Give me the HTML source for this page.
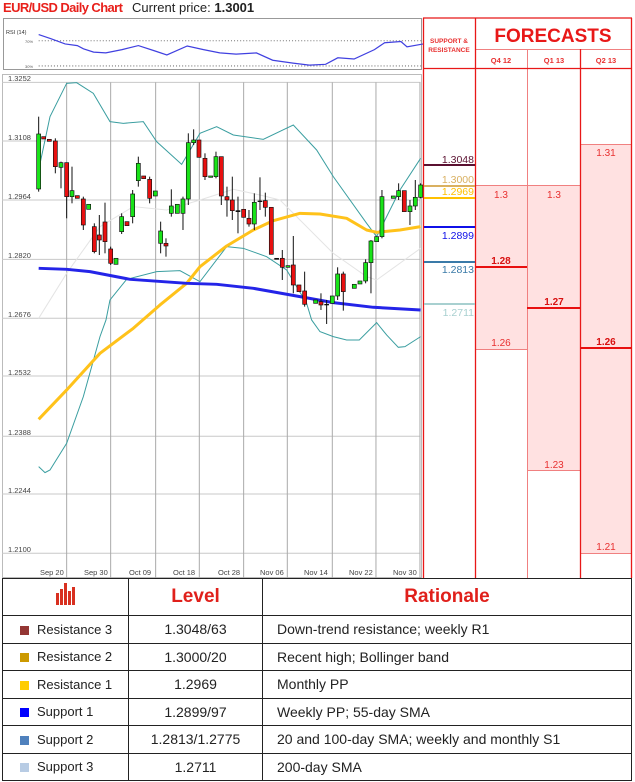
<!DOCTYPE html>
<html><head><meta charset="utf-8"><style>
*{margin:0;padding:0;box-sizing:border-box}
body{width:635px;height:782px;background:#fff;font-family:"Liberation Sans",sans-serif;position:relative;overflow:hidden}
.a{position:absolute;white-space:nowrap}
table{position:absolute;left:2px;top:578px;width:630px;border-collapse:collapse;font-size:13px;color:#222}
td{border:1px solid #222;height:27.5px;padding:0}
td.c{text-align:center;font-size:14px}
td.r{padding-left:14px;font-size:14px}
.sq{display:inline-block;width:9px;height:9px;margin:0 8px 0 17px;vertical-align:-1px}
th{border:1px solid #222;height:37px;color:#e0201b;font-size:19px;font-weight:bold}
</style></head><body>
<div class="a" style="left:3px;top:0px;font-size:13px;color:#e8201b;font-weight:bold;letter-spacing:-0.6px">EUR/USD Daily Chart</div>
<div class="a" style="left:132px;top:0px;font-size:13px;color:#222">Current price: <b>1.3001</b></div>

<svg class="a" style="left:0;top:0" width="635" height="782">
<!-- RSI -->
<rect x="3.5" y="18.5" width="418" height="51" fill="#fff" stroke="#999"/>
<g transform="scale(0.407)">
<line x1="95" y1="100" x2="1040" y2="100" stroke="#777" stroke-width="2.5" stroke-dasharray="2.5,5"/>
<line x1="95" y1="162" x2="1040" y2="162" stroke="#777" stroke-width="2.5" stroke-dasharray="2.5,5"/>
<polyline fill="none" stroke="#4040e0" stroke-width="3" points="95,85 125,95 160,108 190,112 205,120 230,128 260,130 300,122 340,112 380,125 410,135 460,113 500,122 540,130 580,133 630,130 670,148 720,155 760,160 800,158 830,142 870,145 920,122 945,105 985,102 1000,115 1040,108"/>
</g>
<text x="6" y="34" font-size="5.5" fill="#333" font-family="Liberation Sans">RSI (14)</text>
<text x="25" y="43" font-size="4" fill="#555" font-family="Liberation Sans">70%</text>
<text x="25" y="68" font-size="4" fill="#555" font-family="Liberation Sans">30%</text>

<!-- main chart -->
<rect x="2.5" y="74.5" width="419" height="503" fill="#fff" stroke="#bbb"/>
<g transform="translate(0,70) scale(0.3333)">
<g stroke="#c8c8c8" stroke-width="3">
<line x1="6" y1="37" x2="1262" y2="37"/><line x1="6" y1="213" x2="1262" y2="213"/><line x1="6" y1="390" x2="1262" y2="390"/><line x1="6" y1="568" x2="1262" y2="568"/><line x1="6" y1="745" x2="1262" y2="745"/><line x1="6" y1="918" x2="1262" y2="918"/><line x1="6" y1="1099" x2="1262" y2="1099"/><line x1="6" y1="1272" x2="1262" y2="1272"/><line x1="6" y1="1450" x2="1262" y2="1450"/>
</g>
<g stroke="#aaa" stroke-width="3">
<line x1="200" y1="37" x2="200" y2="1524"/><line x1="332" y1="37" x2="332" y2="1524"/><line x1="467" y1="37" x2="467" y2="1524"/><line x1="598" y1="37" x2="598" y2="1524"/><line x1="731" y1="37" x2="731" y2="1524"/><line x1="862" y1="37" x2="862" y2="1524"/><line x1="997" y1="37" x2="997" y2="1524"/><line x1="1128" y1="37" x2="1128" y2="1524"/><line x1="1260" y1="37" x2="1260" y2="1524"/>
</g>
<polyline fill="none" stroke="#e4e4e4" stroke-width="3" points="116,745 200,610 300,470 400,410 500,420 600,390 700,358 780,375 840,390 900,450 1000,550 1100,620 1130,630 1262,535"/>
<polyline fill="none" stroke="#3a9ea0" stroke-width="3" points="116,300 150,140 200,40 230,38 280,70 330,155 370,160 430,155 470,215 545,283 600,190 650,170 700,195 790,208 880,165 950,240 1000,320 1100,460 1130,500 1200,360 1262,265"/>
<polyline fill="none" stroke="#3a9ea0" stroke-width="3" points="116,1190 135,1208 150,1200 200,1120 250,980 300,800 318,750 330,690 380,628 470,605 540,602 600,635 680,530 730,535 800,560 860,600 920,700 935,750 960,785 1000,800 1040,810 1078,810 1130,758 1160,795 1195,832 1215,830 1262,800"/>
<polyline fill="none" stroke="#ffc21a" stroke-width="9" stroke-linejoin="round" points="116,1048 200,960 300,850 400,775 480,705 560,640 600,590 680,528 760,480 820,452 900,430 960,432 1040,445 1100,480 1130,487 1200,480 1262,470"/>
<polyline fill="none" stroke="#2424e8" stroke-width="9" stroke-linejoin="round" points="116,595 200,598 270,605 390,628 560,640 650,643 760,655 900,680 1000,698 1120,712 1262,720"/>
<g stroke="#111" stroke-width="3">
<line x1="116" y1="140" x2="116" y2="365"/><line x1="166" y1="205" x2="166" y2="310"/><line x1="183" y1="275" x2="183" y2="355"/><line x1="200" y1="278" x2="200" y2="445"/><line x1="216" y1="290" x2="216" y2="400"/><line x1="250" y1="380" x2="250" y2="480"/><line x1="283" y1="460" x2="283" y2="550"/><line x1="298" y1="435" x2="298" y2="555"/><line x1="315" y1="398" x2="315" y2="550"/><line x1="332" y1="530" x2="332" y2="585"/><line x1="365" y1="430" x2="365" y2="492"/><line x1="398" y1="360" x2="398" y2="460"/><line x1="415" y1="260" x2="415" y2="350"/><line x1="449" y1="320" x2="449" y2="400"/><line x1="482" y1="455" x2="482" y2="550"/><line x1="498" y1="505" x2="498" y2="560"/><line x1="514" y1="358" x2="514" y2="440"/><line x1="549" y1="380" x2="549" y2="480"/><line x1="565" y1="190" x2="565" y2="405"/><line x1="581" y1="178" x2="581" y2="225"/><line x1="615" y1="250" x2="615" y2="330"/><line x1="648" y1="245" x2="648" y2="325"/><line x1="664" y1="260" x2="664" y2="405"/><line x1="681" y1="350" x2="681" y2="440"/><line x1="697" y1="320" x2="697" y2="450"/><line x1="714" y1="380" x2="714" y2="490"/><line x1="747" y1="420" x2="747" y2="470"/><line x1="763" y1="370" x2="763" y2="480"/><line x1="780" y1="322" x2="780" y2="420"/><line x1="796" y1="368" x2="796" y2="440"/><line x1="847" y1="540" x2="847" y2="630"/><line x1="880" y1="498" x2="880" y2="670"/><line x1="914" y1="605" x2="914" y2="710"/><line x1="963" y1="670" x2="963" y2="720"/><line x1="980" y1="690" x2="980" y2="762"/><line x1="1013" y1="592" x2="1013" y2="690"/><line x1="1030" y1="605" x2="1030" y2="722"/><line x1="1097" y1="568" x2="1097" y2="640"/><line x1="1113" y1="510" x2="1113" y2="670"/><line x1="1146" y1="360" x2="1146" y2="505"/><line x1="1196" y1="340" x2="1196" y2="390"/><line x1="1230" y1="390" x2="1230" y2="465"/><line x1="1246" y1="330" x2="1246" y2="420"/><line x1="1262" y1="340" x2="1262" y2="385"/>
</g>
<g stroke="#111" stroke-width="2">
<rect x="110" y="192" width="12" height="165" fill="#19e319"/>
<rect x="125" y="200" width="12" height="7" fill="#e81010"/>
<rect x="142" y="208" width="12" height="6" fill="#e81010"/>
<rect x="160" y="213" width="12" height="77" fill="#e81010"/>
<rect x="177" y="278" width="12" height="14" fill="#19e319"/>
<rect x="194" y="278" width="12" height="102" fill="#e81010"/>
<rect x="210" y="362" width="12" height="18" fill="#19e319"/>
<rect x="226" y="377" width="12" height="8" fill="#e81010"/>
<rect x="244" y="387" width="12" height="78" fill="#e81010"/>
<rect x="260" y="403" width="12" height="15" fill="#19e319"/>
<rect x="277" y="470" width="12" height="75" fill="#e81010"/>
<rect x="292" y="495" width="12" height="15" fill="#e81010"/>
<rect x="309" y="456" width="12" height="59" fill="#e81010"/>
<rect x="326" y="537" width="12" height="43" fill="#e81010"/>
<rect x="342" y="565" width="12" height="18" fill="#19e319"/>
<rect x="359" y="440" width="12" height="45" fill="#19e319"/>
<rect x="375" y="455" width="12" height="12" fill="#e81010"/>
<rect x="392" y="372" width="12" height="68" fill="#19e319"/>
<rect x="409" y="280" width="12" height="52" fill="#19e319"/>
<rect x="425" y="318" width="12" height="8" fill="#e81010"/>
<rect x="443" y="328" width="12" height="57" fill="#e81010"/>
<rect x="460" y="363" width="12" height="15" fill="#19e319"/>
<rect x="476" y="483" width="12" height="37" fill="#19e319"/>
<rect x="492" y="520" width="12" height="8" fill="#e81010"/>
<rect x="508" y="408" width="12" height="22" fill="#19e319"/>
<rect x="526" y="403" width="12" height="27" fill="#19e319"/>
<rect x="543" y="387" width="12" height="43" fill="#19e319"/>
<rect x="559" y="218" width="12" height="169" fill="#19e319"/>
<rect x="575" y="210" width="12" height="8" fill="#19e319"/>
<rect x="591" y="210" width="12" height="52" fill="#e81010"/>
<rect x="609" y="265" width="12" height="55" fill="#e81010"/>
<rect x="626" y="318" width="12" height="4" fill="#19e319"/>
<rect x="642" y="260" width="12" height="60" fill="#19e319"/>
<rect x="658" y="260" width="12" height="118" fill="#e81010"/>
<rect x="675" y="380" width="12" height="10" fill="#e81010"/>
<rect x="691" y="390" width="12" height="32" fill="#e81010"/>
<rect x="708" y="422" width="12" height="3" fill="#111"/>
<rect x="725" y="418" width="12" height="24" fill="#e81010"/>
<rect x="741" y="445" width="12" height="17" fill="#e81010"/>
<rect x="757" y="397" width="12" height="65" fill="#19e319"/>
<rect x="774" y="393" width="12" height="2" fill="#111"/>
<rect x="790" y="392" width="12" height="20" fill="#e81010"/>
<rect x="808" y="412" width="12" height="141" fill="#e81010"/>
<rect x="824" y="565" width="12" height="3" fill="#111"/>
<rect x="841" y="565" width="12" height="27" fill="#e81010"/>
<rect x="858" y="587" width="12" height="5" fill="#19e319"/>
<rect x="874" y="585" width="12" height="60" fill="#e81010"/>
<rect x="891" y="645" width="12" height="20" fill="#e81010"/>
<rect x="908" y="663" width="12" height="40" fill="#e81010"/>
<rect x="941" y="690" width="12" height="10" fill="#19e319"/>
<rect x="957" y="695" width="12" height="10" fill="#e81010"/>
<rect x="974" y="703" width="12" height="2" fill="#111"/>
<rect x="991" y="678" width="12" height="22" fill="#19e319"/>
<rect x="1007" y="612" width="12" height="66" fill="#19e319"/>
<rect x="1024" y="612" width="12" height="53" fill="#e81010"/>
<rect x="1057" y="643" width="12" height="12" fill="#19e319"/>
<rect x="1074" y="633" width="12" height="9" fill="#19e319"/>
<rect x="1091" y="578" width="12" height="55" fill="#19e319"/>
<rect x="1107" y="513" width="12" height="65" fill="#19e319"/>
<rect x="1124" y="500" width="12" height="15" fill="#19e319"/>
<rect x="1140" y="380" width="12" height="120" fill="#19e319"/>
<rect x="1174" y="378" width="12" height="7" fill="#19e319"/>
<rect x="1190" y="362" width="12" height="18" fill="#19e319"/>
<rect x="1207" y="362" width="12" height="63" fill="#e81010"/>
<rect x="1224" y="408" width="12" height="17" fill="#19e319"/>
<rect x="1240" y="382" width="12" height="26" fill="#19e319"/>
<rect x="1256" y="345" width="12" height="37" fill="#19e319"/>
</g>
</g>
<g font-family="Liberation Sans" font-size="7.5" fill="#444">
<text x="8" y="81">1.3252</text><text x="8" y="140">1.3108</text><text x="8" y="199">1.2964</text><text x="8" y="258">1.2820</text><text x="8" y="317">1.2676</text><text x="8" y="375">1.2532</text><text x="8" y="435">1.2388</text><text x="8" y="493">1.2244</text><text x="8" y="552">1.2100</text>
<text x="40" y="575">Sep 20</text><text x="84" y="575">Sep 30</text><text x="129" y="575">Oct 09</text><text x="173" y="575">Oct 18</text><text x="218" y="575">Oct 28</text><text x="260" y="575">Nov 06</text><text x="304" y="575">Nov 14</text><text x="349" y="575">Nov 22</text><text x="393" y="575">Nov 30</text>
</g>

<!-- right panel -->
<rect x="476" y="185" width="51" height="164" fill="#ffe1e1"/>
<rect x="527" y="185" width="53" height="285" fill="#ffe1e1"/>
<rect x="580" y="144" width="52" height="409" fill="#ffe1e1"/>
<g stroke="#f08080" stroke-width="1">
<line x1="476" y1="185.5" x2="580" y2="185.5"/><line x1="476" y1="349.5" x2="527" y2="349.5"/><line x1="527" y1="470.5" x2="580" y2="470.5"/><line x1="580" y1="144.5" x2="632" y2="144.5"/><line x1="580" y1="553.5" x2="632" y2="553.5"/>
<line x1="475.5" y1="49.5" x2="632" y2="49.5"/><line x1="527.5" y1="49" x2="527.5" y2="578"/>
</g>
<g stroke="#e81818" stroke-width="1.3">
<line x1="423" y1="18" x2="632" y2="18"/><line x1="423" y1="68.5" x2="632" y2="68.5"/>
<line x1="423.5" y1="18" x2="423.5" y2="578"/><line x1="475.5" y1="18" x2="475.5" y2="578"/><line x1="580.5" y1="49" x2="580.5" y2="578"/><line x1="631.5" y1="18" x2="631.5" y2="578"/>
</g>
<line x1="476" y1="267" x2="527" y2="267" stroke="#e81010" stroke-width="2"/>
<line x1="527" y1="308" x2="580" y2="308" stroke="#e81010" stroke-width="2"/>
<line x1="580" y1="348" x2="632" y2="348" stroke="#e81010" stroke-width="2"/>
<g stroke-width="2">
<line x1="424" y1="165" x2="475" y2="165" stroke="#5a1030"/>
<line x1="424" y1="186" x2="475" y2="186" stroke="#d9b060"/>
<line x1="424" y1="198" x2="475" y2="198" stroke="#ffc000"/>
<line x1="424" y1="227" x2="475" y2="227" stroke="#1010e8"/>
<line x1="424" y1="262" x2="475" y2="262" stroke="#3a7aa8"/>
<line x1="424" y1="304" x2="475" y2="304" stroke="#a8d0d0"/>
</g>
<g font-family="Liberation Sans" font-size="10.5" text-anchor="end">
<text x="474" y="163" fill="#5a1030">1.3048</text>
<text x="474" y="183" fill="#d9b060">1.3000</text>
<text x="474" y="195" fill="#ffc000">1.2969</text>
<text x="474" y="239" fill="#1010e8">1.2899</text>
<text x="474" y="273" fill="#3a7aa8">1.2813</text>
<text x="474" y="316" fill="#a8d0d0">1.2711</text>
</g>
<g font-family="Liberation Sans" font-size="10" fill="#e83030" text-anchor="middle">
<text x="501" y="198">1.3</text><text x="554" y="198">1.3</text><text x="606" y="156">1.31</text>
<text x="501" y="346">1.26</text><text x="554" y="468">1.23</text><text x="606" y="550">1.21</text>
<text x="501" y="264" font-weight="bold" fill="#d81010">1.28</text><text x="554" y="305" font-weight="bold" fill="#d81010">1.27</text><text x="606" y="345" font-weight="bold" fill="#d81010">1.26</text>
<text x="501" y="63" font-size="7.5" font-weight="bold">Q4 12</text><text x="554" y="63" font-size="7.5" font-weight="bold">Q1 13</text><text x="606" y="63" font-size="7.5" font-weight="bold">Q2 13</text>
<text x="449" y="43" font-size="6.5" font-weight="bold">SUPPORT &amp;</text><text x="449" y="52" font-size="6.5" font-weight="bold">RESISTANCE</text>
<text x="553" y="42" font-size="19" font-weight="bold" fill="#e81818">FORECASTS</text>
</g>
</svg>

<table>
<tr><th style="width:126px"><svg width="22" height="22" viewBox="0 0 22 22"><g fill="#d83020"><rect x="1" y="10" width="3" height="12"/><rect x="5" y="6" width="3" height="16"/><rect x="9" y="0" width="3" height="22"/><rect x="13" y="8" width="3" height="14"/><rect x="17" y="4" width="3" height="18"/></g></svg></th><th style="width:134px">Level</th><th>Rationale</th></tr>
<tr><td><span class="sq" style="background:#943634"></span>Resistance 3</td><td class="c">1.3048/63</td><td class="r">Down-trend resistance; weekly R1</td></tr>
<tr><td><span class="sq" style="background:#cc9900"></span>Resistance 2</td><td class="c">1.3000/20</td><td class="r">Recent high; Bollinger band</td></tr>
<tr><td><span class="sq" style="background:#ffcc00"></span>Resistance 1</td><td class="c">1.2969</td><td class="r">Monthly PP</td></tr>
<tr><td><span class="sq" style="background:#0000ff"></span>Support 1</td><td class="c">1.2899/97</td><td class="r">Weekly PP; 55-day SMA</td></tr>
<tr><td><span class="sq" style="background:#4f81bd"></span>Support 2</td><td class="c">1.2813/1.2775</td><td class="r">20 and 100-day SMA; weekly and monthly S1</td></tr>
<tr><td><span class="sq" style="background:#b8cce4"></span>Support 3</td><td class="c">1.2711</td><td class="r">200-day SMA</td></tr>
</table>
</body></html>
